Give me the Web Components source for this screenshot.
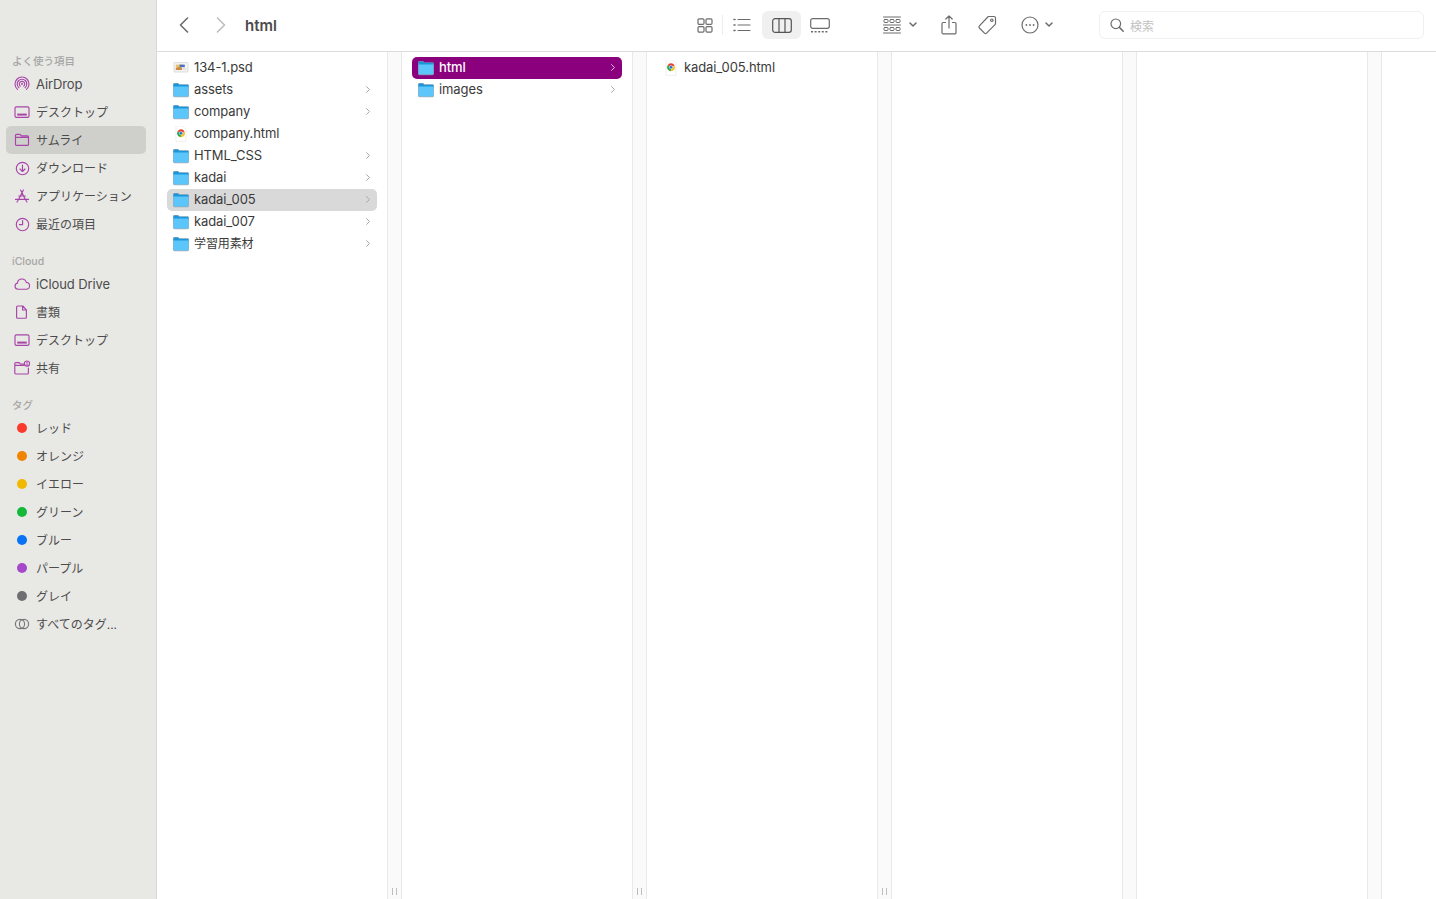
<!DOCTYPE html>
<html lang="ja">
<head>
<meta charset="utf-8">
<title>html</title>
<style>
  html, body { margin: 0; height: 100%; overflow: hidden; background: #fff; }
  body { font-family: Inter, "Noto Sans CJK JP", sans-serif; }
</style>
</head>
<body>
<finder-window>
  <finder-sidebar slot="sidebar">
    <side-section label="よく使う項目">
      <side-item icon="airdrop">AirDrop</side-item>
      <side-item icon="desktop">デスクトップ</side-item>
      <side-item icon="folder" active>サムライ</side-item>
      <side-item icon="download">ダウンロード</side-item>
      <side-item icon="apps">アプリケーション</side-item>
      <side-item icon="recent">最近の項目</side-item>
    </side-section>
    <side-section label="iCloud">
      <side-item icon="cloud">iCloud Drive</side-item>
      <side-item icon="doc">書類</side-item>
      <side-item icon="desktop">デスクトップ</side-item>
      <side-item icon="shared">共有</side-item>
    </side-section>
    <side-section label="タグ">
      <side-item dot="#fb3a2e">レッド</side-item>
      <side-item dot="#f08300">オレンジ</side-item>
      <side-item dot="#f0b800">イエロー</side-item>
      <side-item dot="#14b93a">グリーン</side-item>
      <side-item dot="#0a72f5">ブルー</side-item>
      <side-item dot="#a548c9">パープル</side-item>
      <side-item dot="#6f6f72">グレイ</side-item>
      <side-item icon="alltags" grey>すべてのタグ...</side-item>
    </side-section>
  </finder-sidebar>

  <finder-toolbar slot="toolbar" title="html"></finder-toolbar>

  <column-browser slot="main">
    <file-column>
      <file-row kind="psd">134-1.psd</file-row>
      <file-row kind="folder" more>assets</file-row>
      <file-row kind="folder" more>company</file-row>
      <file-row kind="html">company.html</file-row>
      <file-row kind="folder" more>HTML_CSS</file-row>
      <file-row kind="folder" more>kadai</file-row>
      <file-row kind="folder" more state="grey">kadai_005</file-row>
      <file-row kind="folder" more>kadai_007</file-row>
      <file-row kind="folder" more>学習用素材</file-row>
    </file-column>
    <file-column>
      <file-row kind="folder" more state="accent">html</file-row>
      <file-row kind="folder" more>images</file-row>
    </file-column>
    <file-column>
      <file-row kind="html">kadai_005.html</file-row>
    </file-column>
    <file-column nogrip></file-column>
    <file-column nogrip></file-column>
    <file-column last></file-column>
  </column-browser>
</finder-window>

<script>
// sidebar icons, 16x16, stroked in the accent colour
const sideIcons = {
  airdrop: `<path d="M3.5 13.4A7 7 0 1 1 12.5 13.4M4.9 11.7A4.8 4.8 0 1 1 11.1 11.7M6.3 10.1A2.7 2.7 0 1 1 9.7 10.1"/><circle cx="8" cy="8" r="1" fill="currentColor" stroke="none"/>`,
  desktop: `<rect x="1" y="2.8" width="14" height="10.6" rx="1.4"/><rect x="3.2" y="9.6" width="9.6" height="2" fill="currentColor" stroke="none"/>`,
  folder: `<path d="M1.5 5.2V3.4a1 1 0 0 1 1-1h3.6l1.2 1.4h6.2a1 1 0 0 1 1 1v7.6a1 1 0 0 1-1 1H2.5a1 1 0 0 1-1-1zM1.5 5.4h13"/>`,
  download: `<circle cx="8.5" cy="8.5" r="6.2"/><path d="M8.5 5v6.4M6 9l2.5 2.5L11 9"/>`,
  apps: `<path d="M6.6 2l4.8 9.6M9.4 2L4.6 11.6M1.5 11.4h13M4.7 8h6.6M3 14l1.4-2.2M13 14l-1.4-2.2"/>`,
  recent: `<circle cx="8.5" cy="8.5" r="6.2"/><path d="M8.6 4.6v4H5.4"/>`,
  cloud: `<path d="M4 13.2a3.1 3.1 0 0 1-.6-6.1A4.6 4.6 0 0 1 8 3a4.6 4.6 0 0 1 4.3 3.4 3.4 3.4 0 0 1-.2 6.8z"/>`,
  doc: `<path d="M3.6 2h5.2l3.6 3.8v7.4a1 1 0 0 1-1 1H3.6a1 1 0 0 1-1-1V3a1 1 0 0 1 1-1zM8.6 2v4h3.8"/>`,
  shared: `<path d="M.8 5.2V3.6a1 1 0 0 1 1-1h3.4l1.2 1.4h4M.8 5.4h9.4M.8 5.2V13a1 1 0 0 0 1 1h11.6a1 1 0 0 0 1-1V8"/><circle cx="13" cy="3.6" r="2.6"/><circle cx="13" cy="2.8" r=".8" fill="currentColor" stroke="none"/><path d="M13 4v1.6"/>`,
  alltags: `<circle cx="6" cy="8" r="4.6"/><circle cx="10" cy="8" r="4.6"/>`
};

const sectionTemplate = document.createElement('template');
sectionTemplate.innerHTML = `
<style>
  :host { display: block; margin-bottom: 14px; }
  .label {
    height: 18px;
    line-height: 20px;
    padding-left: 12px;
    font-size: 10.5px;
    font-weight: 500;
    color: #a6a6a4;
  }
</style>
<div class="label"></div>
<slot></slot>
`;

class SideSection extends HTMLElement {
  connectedCallback() {
    if (this.shadowRoot) return;
    this.attachShadow({ mode: 'open' });
    this.shadowRoot.appendChild(sectionTemplate.content.cloneNode(true));
    this.shadowRoot.querySelector('.label').textContent = this.getAttribute('label');
  }
}

const itemTemplate = document.createElement('template');
itemTemplate.innerHTML = `
<style>
  :host {
    display: flex;
    align-items: center;
    height: 28px;
    margin: 0 10px 0 6px;
    padding-left: 8px;
    border-radius: 5px;
    font-size: 12px;
    color: #4c4c4c;
    white-space: nowrap;
  }
  :host([active]) { background: #cfcfcb; }
  .icon { flex: none; width: 16px; height: 16px; margin-right: 6px; color: #a845a8; }
  :host([grey]) .icon { color: #777; }
  svg { display: block; width: 16px; height: 16px; fill: none; stroke: currentColor; stroke-width: 1.15; stroke-linecap: round; stroke-linejoin: round; }
  .dot { display: block; width: 10px; height: 10px; margin: 3px; border-radius: 50%; }
  .text { padding-bottom: 1px; }
</style>
<span class="icon"></span><span class="text"><slot></slot></span>
`;

class SideItem extends HTMLElement {
  connectedCallback() {
    if (this.shadowRoot) return;
    this.attachShadow({ mode: 'open' });
    this.shadowRoot.appendChild(itemTemplate.content.cloneNode(true));
    const box = this.shadowRoot.querySelector('.icon');
    if (this.hasAttribute('dot')) {
      box.innerHTML = `<span class="dot" style="background:${this.getAttribute('dot')}"></span>`;
    } else {
      box.innerHTML = `<svg viewBox="0 0 16 16">${sideIcons[this.getAttribute('icon')]}</svg>`;
    }
    // latin labels sit at 13px in the reference, kana at 12px
    if (/^[A-Za-z]/.test(this.textContent)) {
      this.style.fontSize = '13px';
      this.style.letterSpacing = '-0.1px';
    }
  }
}

const sidebarTemplate = document.createElement('template');
sidebarTemplate.innerHTML = `
<style>
  :host {
    display: block;
    box-sizing: border-box;
    width: 157px;
    height: 100%;
    padding-top: 52px;
    background: #e8e8e5;
    border-right: 1px solid #d9d9d6;
  }
</style>
<slot></slot>
`;

class FinderSidebar extends HTMLElement {
  constructor() {
    super();
    this.attachShadow({ mode: 'open' });
    this.shadowRoot.appendChild(sidebarTemplate.content.cloneNode(true));
  }
}

const toolbarTemplate = document.createElement('template');
toolbarTemplate.innerHTML = `
<style>
  :host {
    display: flex;
    align-items: center;
    box-sizing: border-box;
    height: 52px;
    padding: 0 12px 1px 9px;
    background: #fff;
    border-bottom: 1px solid #dcdcdc;
    color: #6c6c6c;
  }
  svg { display: block; fill: none; stroke: currentColor; stroke-width: 1.2; stroke-linecap: round; stroke-linejoin: round; }
  .btn { display: flex; align-items: center; justify-content: center; flex: none; height: 28px; }
  .nav { width: 36px; }
  .nav.off { width: 37px; color: #bdbdbd; }
  .title { flex: 1; margin-left: 6px; font-size: 15px; font-weight: 600; color: #4b4b4b; }
  .views { display: flex; align-items: center; }
  .sep { flex: none; width: 1px; height: 20px; background: #ececec; margin-left: -1px; }
  .w37 { width: 37px; }
  .sel { width: 39px; margin-left: 2px; background: #f0f0f0; border-radius: 6px; color: #555; }
  .group { width: 38px; margin-left: 43px; gap: 8px; }
  .share { width: 22px; margin-left: 19px; }
  .tag { width: 24px; margin-left: 15px; }
  .more { width: 38px; margin-left: 19px; gap: 6px; }
  .search {
    display: flex;
    align-items: center;
    flex: none;
    box-sizing: border-box;
    width: 325px;
    height: 28px;
    margin-left: 43px;
    padding-left: 10px;
    border: 1px solid #f0f0f0;
    border-radius: 6px;
    font-size: 12px;
    color: #c2c2c2;
  }
  .search svg { margin-right: 6px; color: #6c6c6c; }
</style>
<div class="btn nav"><svg width="10" height="16" viewBox="0 0 10 16"><path d="M8.5 1L1.5 8l7 7" stroke-width="1.6"/></svg></div>
<div class="btn nav off"><svg width="10" height="16" viewBox="0 0 10 16"><path d="M1.5 1l7 7-7 7" stroke-width="1.6"/></svg></div>
<div class="title"></div>
<div class="views">
  <div class="btn w37"><svg width="16" height="15" viewBox="0 0 16 15"><rect x="1" y=".8" width="6" height="5.6" rx="1.2"/><rect x="9" y=".8" width="6" height="5.6" rx="1.2"/><rect x="1" y="8.6" width="6" height="5.6" rx="1.2"/><rect x="9" y="8.6" width="6" height="5.6" rx="1.2"/></svg></div>
  <div class="sep"></div>
  <div class="btn w37"><svg width="18" height="14" viewBox="0 0 18 14"><path d="M5 1.5h12M5 7h12M5 12.5h12"/><path d="M1 1.5h1M1 7h1M1 12.5h1" stroke-width="1.6"/></svg></div>
  <div class="btn sel"><svg width="20" height="15" viewBox="0 0 20 15"><rect x=".7" y=".7" width="18.6" height="13.6" rx="2.4"/><path d="M7 .7v13.6M13 .7v13.6"/></svg></div>
  <div class="btn w37"><svg width="20" height="15" viewBox="0 0 20 15"><rect x=".7" y=".7" width="18.6" height="9.6" rx="2"/><path d="M1 13.8h18" stroke-width="1.6" stroke-dasharray="2 1.6" stroke-linecap="butt"/></svg></div>
</div>
<div class="btn group"><svg width="18" height="18" viewBox="0 0 18 18"><path d="M.5 1h17M.5 9h17M.5 17h17" stroke-width="1"/><rect x="1" y="3.5" width="4" height="3" rx=".6" stroke-width="1"/><rect x="7" y="3.5" width="4" height="3" rx=".6" stroke-width="1"/><rect x="13" y="3.5" width="4" height="3" rx=".6" stroke-width="1"/><rect x="1" y="11.5" width="4" height="3" rx=".6" stroke-width="1"/><rect x="7" y="11.5" width="4" height="3" rx=".6" stroke-width="1"/><rect x="13" y="11.5" width="4" height="3" rx=".6" stroke-width="1"/></svg><svg width="8" height="6" viewBox="0 0 8 6"><path d="M1 1l3 3 3-3" stroke-width="1.5"/></svg></div>
<div class="btn share"><svg width="16" height="20" viewBox="0 0 16 20"><path d="M4.5 7.5H2.2a1.2 1.2 0 0 0-1.2 1.2v9a1.2 1.2 0 0 0 1.2 1.2h11.6a1.2 1.2 0 0 0 1.2-1.2v-9a1.2 1.2 0 0 0-1.2-1.2h-2.3M8 13V1M4.8 4L8 1l3.2 3"/></svg></div>
<div class="btn tag"><svg width="20" height="20" viewBox="0 0 20 20"><path d="M11.4 1.5h5.6a1.5 1.5 0 0 1 1.5 1.5v5.6a1.5 1.5 0 0 1-.5 1.1l-8.4 8.4a1.5 1.5 0 0 1-2.1 0l-5.1-5.1a1.5 1.5 0 0 1 0-2.1l8.4-8.9a1.5 1.5 0 0 1 .6-.5z"/><circle cx="14.8" cy="5.2" r="1.2"/></svg></div>
<div class="btn more"><svg width="18" height="18" viewBox="0 0 18 18"><circle cx="9" cy="9" r="8"/><circle cx="5.4" cy="9" r=".9" fill="currentColor" stroke="none"/><circle cx="9" cy="9" r=".9" fill="currentColor" stroke="none"/><circle cx="12.6" cy="9" r=".9" fill="currentColor" stroke="none"/></svg><svg width="8" height="6" viewBox="0 0 8 6"><path d="M1 1l3 3 3-3" stroke-width="1.5"/></svg></div>
<div class="search"><svg width="14" height="14" viewBox="0 0 14 14"><circle cx="5.8" cy="5.8" r="4.8"/><path d="M9.4 9.4l3.8 3.8" stroke-width="1.5"/></svg><span>検索</span></div>
`;

class FinderToolbar extends HTMLElement {
  connectedCallback() {
    if (this.shadowRoot) return;
    this.attachShadow({ mode: 'open' });
    this.shadowRoot.appendChild(toolbarTemplate.content.cloneNode(true));
    this.shadowRoot.querySelector('.title').textContent = this.getAttribute('title');
    this.removeAttribute('title');
  }
}

// file icons are shared by every row
const folderIcon = `<svg viewBox="0 0 16 16">
  <path d="M0 2.4A1.4 1.4 0 0 1 1.4 1h3.8l1.2 1.2h8.2A1.4 1.4 0 0 1 16 3.6v10.2a1.4 1.4 0 0 1-1.4 1.4H1.4A1.4 1.4 0 0 1 0 13.8z" fill="#8d9aa3" opacity=".8"/>
  <path d="M.5 2.4a.9.9 0 0 1 .9-.9h3.6l1.2 1.2h8.4a.9.9 0 0 1 .9.9V5.4H.5z" fill="#1a96dc"/>
  <path d="M.5 4.6h15v8.9a1 1 0 0 1-1 1h-13a1 1 0 0 1-1-1z" fill="#5cc6fb"/>
</svg>`;
const htmlIcon = `<svg viewBox="0 0 16 16">
  <path d="M3 0h6.6L13 3.4V15.4H3z" fill="#fff" stroke="#e6e6e6" stroke-width=".6"/>
  <path d="M4.6 5.2a4 4 0 0 1 6.9.2L8 7.2z" fill="#e8402f"/>
  <path d="M4.6 5.2A4 4 0 0 0 7.6 11.2L9 8z" fill="#2fa84a"/>
  <path d="M11.5 5.4A4 4 0 0 1 7.6 11.2L8.6 7.4z" fill="#f6c51c"/>
  <circle cx="8" cy="7.2" r="1.7" fill="#2c6fd8" stroke="#fff" stroke-width=".5"/>
</svg>`;
const psdIcon = `<svg viewBox="0 0 16 16">
  <rect x="1" y="2.6" width="14" height="9.4" rx=".8" fill="#f6f6f4" stroke="#c8c8c8" stroke-width=".6"/>
  <rect x="2.8" y="4.6" width="6.2" height="5.4" fill="#ecc06a"/>
  <rect x="6.6" y="4.6" width="5.2" height="2.6" fill="#4a70c4"/>
  <path d="M2.8 8.4l3-1.6 3 1.4v1.8h-6z" fill="#c98a48"/>
  <rect x="9.4" y="7.8" width="3.8" height="2.2" fill="#e2e2e2"/>
</svg>`;
const kindIcons = { folder: folderIcon, html: htmlIcon, psd: psdIcon };

const rowTemplate = document.createElement('template');
rowTemplate.innerHTML = `
<style>
  :host {
    display: flex;
    align-items: center;
    height: 22px;
    padding: 0 6px;
    border-radius: 5px;
    font-size: 13px;
    letter-spacing: -0.1px;
    color: #3a3a3a;
    white-space: nowrap;
  }
  :host([state="grey"]) { background: #d9d9d9; }
  :host([state="accent"]) { background: #8b007d; color: #fff; font-weight: 500; }
  .icon { flex: none; width: 16px; height: 16px; margin-right: 5px; }
  .icon svg { display: block; width: 16px; height: 16px; }
  .name { flex: 1; padding-bottom: 2px; }
  .chev { display: none; flex: none; width: 4px; height: 7px; margin: 0 1px 2px 0; color: #a8a8a8; }
  :host([more]) .chev { display: block; }
  :host([state="accent"]) .chev { color: #e2bcdc; }
</style>
<span class="icon"></span>
<span class="name"><slot></slot></span>
<svg class="chev" viewBox="0 0 4 7" fill="none" stroke="currentColor" stroke-width="1" stroke-linecap="round" stroke-linejoin="round"><path d="M.6.6l2.8 2.9L.6 6.4"/></svg>
`;

class FileRow extends HTMLElement {
  connectedCallback() {
    if (this.shadowRoot) return;
    this.attachShadow({ mode: 'open' });
    this.shadowRoot.appendChild(rowTemplate.content.cloneNode(true));
    this.shadowRoot.querySelector('.icon').innerHTML = kindIcons[this.getAttribute('kind')];
    // kanji names are 12px like the sidebar and sit a pixel higher
    if (!/^[\x00-\x7f]/.test(this.textContent)) {
      this.style.fontSize = '12px';
      this.shadowRoot.querySelector('.name').style.paddingBottom = '3px';
    }
  }
}

const columnTemplate = document.createElement('template');
columnTemplate.innerHTML = `
<style>
  :host { display: flex; flex: none; width: 245px; height: 100%; }
  :host([last]) { flex: 1; width: auto; }
  .list { flex: none; box-sizing: border-box; width: 230px; padding: 5px 10px 0; }
  .grip {
    display: flex;
    align-items: flex-end;
    justify-content: center;
    gap: 3px;
    flex: none;
    box-sizing: border-box;
    width: 15px;
    padding-bottom: 4px;
    background: #fafafa;
    border-left: 1px solid #e9e9e9;
    border-right: 1px solid #e9e9e9;
  }
  .grip i { display: block; width: 1px; height: 7px; background: #bdbdbd; }
  :host([nogrip]) .grip i { display: none; }
  :host([last]) .grip, :host([last]) .list { display: none; }
</style>
<div class="list"><slot></slot></div>
<div class="grip"><i></i><i></i></div>
`;

class FileColumn extends HTMLElement {
  constructor() {
    super();
    this.attachShadow({ mode: 'open' });
    this.shadowRoot.appendChild(columnTemplate.content.cloneNode(true));
  }
}

const browserTemplate = document.createElement('template');
browserTemplate.innerHTML = `
<style>
  :host { display: flex; flex: 1; min-height: 0; background: #fff; }
</style>
<slot></slot>
`;

class ColumnBrowser extends HTMLElement {
  constructor() {
    super();
    this.attachShadow({ mode: 'open' });
    this.shadowRoot.appendChild(browserTemplate.content.cloneNode(true));
  }
}

const windowTemplate = document.createElement('template');
windowTemplate.innerHTML = `
<style>
  :host { display: flex; width: 100%; height: 100vh; overflow: hidden; }
  .main { display: flex; flex-direction: column; flex: 1; min-width: 0; }
</style>
<slot name="sidebar"></slot>
<div class="main">
  <slot name="toolbar"></slot>
  <slot name="main"></slot>
</div>
`;

class FinderWindow extends HTMLElement {
  constructor() {
    super();
    this.attachShadow({ mode: 'open' });
    this.shadowRoot.appendChild(windowTemplate.content.cloneNode(true));
  }
}

window.customElements.define('side-section', SideSection);
window.customElements.define('side-item', SideItem);
window.customElements.define('finder-sidebar', FinderSidebar);
window.customElements.define('finder-toolbar', FinderToolbar);
window.customElements.define('file-row', FileRow);
window.customElements.define('file-column', FileColumn);
window.customElements.define('column-browser', ColumnBrowser);
window.customElements.define('finder-window', FinderWindow);
</script>
</body>
</html>
